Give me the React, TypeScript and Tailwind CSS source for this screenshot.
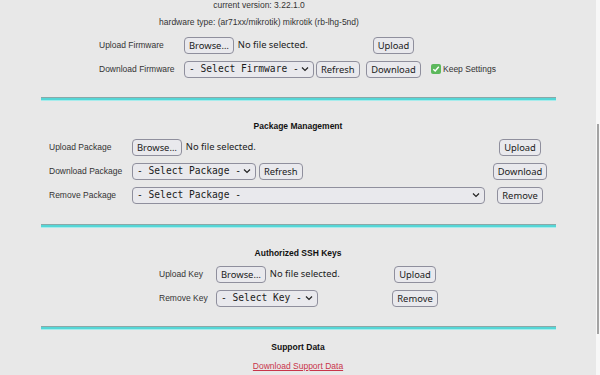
import React from "react";

const lab = "font-['Liberation_Sans',Arial,sans-serif] text-[8.5px] text-[#333]";
const btn =
  "h-[17px] px-[4px] rounded-[4px] border border-[#8f8f9d] bg-[#e9e9ed] font-['Noto_Sans',sans-serif] text-[9.4px] leading-[15px] text-[#1b1b1b] flex items-center";

function Btn({ children }: { children: React.ReactNode }) {
  return <div className={btn}>{children}</div>;
}

function Sel({ text, w }: { text: string; w: string }) {
  return (
    <div
      className={`${w} h-[17px] rounded-[4px] border border-[#8f8f9d] bg-[#e9e9ed] flex items-center pl-[4px] pr-[4px] font-['DejaVu_Sans_Mono',monospace] text-[9.6px] text-[#1b1b1b]`}
    >
      <span className="flex-1 whitespace-pre">{text}</span>
      <svg width="8" height="6" viewBox="0 0 8 6" className="shrink-0">
        <path d="M1 1.5 L4 4.5 L7 1.5" fill="none" stroke="#222" strokeWidth="1.2" />
      </svg>
    </div>
  );
}

function NoFile() {
  return (
    <span className="font-['Noto_Sans',sans-serif] text-[9.4px] text-[#1b1b1b] ml-[4px]">
      No file selected.
    </span>
  );
}

function Divider({ mt }: { mt: string }) {
  return (
    <div className={`${mt} mx-[41px] w-[515px] flex flex-col`}>
      <div className="h-[1px] bg-[#8aa8a8]" />
      <div className="h-[2px] bg-[#55d6d6]" />
      <div className="h-[1px] bg-[#a6ecec]" />
    </div>
  );
}

function Heading({ children, mt }: { children: React.ReactNode; mt: string }) {
  return (
    <div
      className={`${mt} h-[14px] flex items-center justify-center font-['Liberation_Sans',Arial,sans-serif] font-bold text-[8.5px] text-[#111]`}
    >
      {children}
    </div>
  );
}

export default function App() {
  return (
    <div className="w-[600px] h-[375px] overflow-hidden bg-[#e8e8e8] flex">
      <div className="w-[596px] flex flex-col">
        {/* version */}
        <div className="flex h-[10px] items-center pl-[99px]">
          <div className={`${lab} w-[320px] text-center leading-[10px]`}>current version: 3.22.1.0</div>
        </div>
        <div className="flex mt-[6px] h-[12px] items-center pl-[99px]">
          <div className={`${lab} w-[320px] text-center whitespace-nowrap`}>
            hardware type: (ar71xx/mikrotik) mikrotik (rb-lhg-5nd)
          </div>
        </div>
        {/* firmware rows */}
        <div className="flex mt-[5px] h-[24px] items-center pl-[99px]">
          <div className={`${lab} w-[85px]`}>Upload Firmware</div>
          <div className="w-[184px] flex items-center">
            <Btn>Browse…</Btn>
            <NoFile />
          </div>
          <div className="w-[51px] flex justify-center">
            <Btn>Upload</Btn>
          </div>
        </div>
        <div className="flex h-[24px] items-center pl-[99px]">
          <div className={`${lab} w-[85px]`}>Download Firmware</div>
          <div className="w-[184px] flex items-center">
            <Sel text="- Select Firmware -" w="w-[130px]" />
            <div className="ml-[2px]">
              <Btn>Refresh</Btn>
            </div>
          </div>
          <div className="w-[51px] flex justify-center">
            <Btn>Download</Btn>
          </div>
          <div className="ml-[12px] flex items-center">
            <div className="w-[10px] h-[10px] rounded-[2px] bg-[#5cb85c] flex items-center justify-center">
              <svg width="8" height="8" viewBox="0 0 8 8">
                <path d="M1.3 4.2 L3.2 6 L6.8 1.8" fill="none" stroke="#fff" strokeWidth="1.4" />
              </svg>
            </div>
            <span className={`${lab} ml-[2px]`}>Keep Settings</span>
          </div>
        </div>

        <Divider mt="mt-[16px]" />

        <Heading mt="mt-[18px]">Package Management</Heading>
        <div className="flex mt-[2px] h-[24px] items-center pl-[49px]">
          <div className={`${lab} w-[83px]`}>Upload Package</div>
          <div className="w-[362px] flex items-center">
            <Btn>Browse…</Btn>
            <NoFile />
          </div>
          <div className="w-[52px] flex justify-center">
            <Btn>Upload</Btn>
          </div>
        </div>
        <div className="flex h-[24px] items-center pl-[49px]">
          <div className={`${lab} w-[83px]`}>Download Package</div>
          <div className="w-[362px] flex items-center">
            <Sel text="- Select Package -" w="w-[124px]" />
            <div className="ml-[3px]">
              <Btn>Refresh</Btn>
            </div>
          </div>
          <div className="w-[52px] flex justify-center">
            <Btn>Download</Btn>
          </div>
        </div>
        <div className="flex h-[24px] items-center pl-[49px]">
          <div className={`${lab} w-[83px]`}>Remove Package</div>
          <div className="w-[362px] flex items-center">
            <Sel text="- Select Package -" w="w-[353px]" />
          </div>
          <div className="w-[52px] flex justify-center">
            <Btn>Remove</Btn>
          </div>
        </div>

        <Divider mt="mt-[17px]" />

        <Heading mt="mt-[18px]">Authorized SSH Keys</Heading>
        <div className="flex mt-[2px] h-[24px] items-center pl-[159px]">
          <div className={`${lab} w-[57px]`}>Upload Key</div>
          <div className="w-[170px] flex items-center">
            <Btn>Browse…</Btn>
            <NoFile />
          </div>
          <div className="w-[58px] flex justify-center">
            <Btn>Upload</Btn>
          </div>
        </div>
        <div className="flex h-[24px] items-center pl-[159px]">
          <div className={`${lab} w-[57px]`}>Remove Key</div>
          <div className="w-[170px] flex items-center">
            <Sel text="- Select Key -" w="w-[102px]" />
          </div>
          <div className="w-[58px] flex justify-center">
            <Btn>Remove</Btn>
          </div>
        </div>

        <Divider mt="mt-[16px]" />

        <Heading mt="mt-[10px]">Support Data</Heading>
        <div className="mt-[5px] h-[14px] flex items-center justify-center">
          <span className="font-['Liberation_Sans',Arial,sans-serif] text-[8.5px] text-[#c8354a] underline">
            Download Support Data
          </span>
        </div>
      </div>
      <div className="w-[4px] bg-[#f7f7f7] flex flex-col items-center">
        <div className="h-[124px]" />
        <div className="w-[2px] h-[210px] bg-[#a3a3a3]" />
      </div>
    </div>
  );
}
